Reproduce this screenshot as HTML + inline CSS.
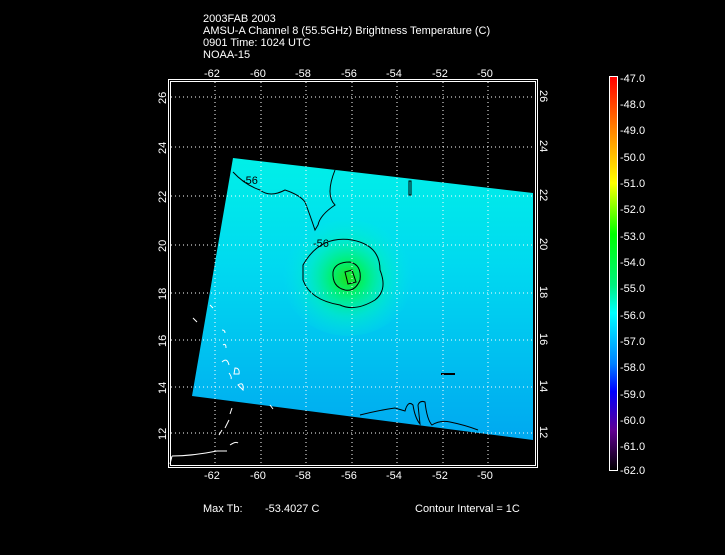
<!DOCTYPE html>
<html><head><style>
body{margin:0;background:#000;width:725px;height:550px;overflow:hidden;font-family:"Liberation Sans",sans-serif}
svg text{font-family:"Liberation Sans",sans-serif;fill:#fff;font-size:11px}
</style></head><body>
<svg width="725" height="550" xmlns="http://www.w3.org/2000/svg">
<defs>
<radialGradient id="g" cx="348" cy="278" r="65" gradientUnits="userSpaceOnUse">
<stop offset="0" stop-color="#20e020"/><stop offset="0.25" stop-color="#00f070"/><stop offset="0.6" stop-color="#00f0c0" stop-opacity="0.6"/><stop offset="1" stop-color="#00e8e8" stop-opacity="0"/>
</radialGradient>
<linearGradient id="b" x1="0" y1="158" x2="0" y2="440" gradientUnits="userSpaceOnUse">
<stop offset="0" stop-color="#00f0e8"/><stop offset="0.4" stop-color="#00d8f0"/><stop offset="1" stop-color="#00a8f0"/>
</linearGradient>
<linearGradient id="cb" x1="0" y1="77" x2="0" y2="470" gradientUnits="userSpaceOnUse">
<stop offset="0" stop-color="#ff0000"/><stop offset="0.13" stop-color="#ff8000"/><stop offset="0.27" stop-color="#ffff00"/><stop offset="0.4" stop-color="#00ff00"/><stop offset="0.53" stop-color="#00f080"/><stop offset="0.6" stop-color="#00ffff"/><stop offset="0.73" stop-color="#0080ff"/><stop offset="0.8" stop-color="#0000ff"/><stop offset="0.9" stop-color="#600090"/><stop offset="1" stop-color="#000000"/>
</linearGradient>
</defs>
<text x="203" y="22">2003FAB 2003</text>
<text x="203" y="34">AMSU-A Channel 8 (55.5GHz) Brightness Temperature (C)</text>
<text x="203" y="46">0901 Time: 1024 UTC</text>
<text x="203" y="58">NOAA-15</text>
<polygon points="233,158 533,193 533,440 192,396" fill="url(#b)"/>
<ellipse cx="348" cy="278" rx="65" ry="58" fill="url(#g)"/>
<g fill="none" stroke="#000" stroke-width="1">
<path d="M303,265 Q320,235 352,240 Q380,245 380,270 Q388,290 375,300 Q355,312 340,305 Q310,300 303,280 Z"/>
<path d="M333,272 Q335,262 350,262 Q362,265 360,280 Q355,292 345,290 Q332,287 333,272 Z"/>
<path d="M345,272 L352,270 L356,282 L348,284 Z"/>
<path d="M233,172 Q245,185 260,190 Q270,198 285,190 Q300,195 305,202 Q310,215 315,230 L318,225 Q320,215 335,205 Q325,195 335,170"/>
<path d="M409,181 L409,195 L411,195 L411,181 Z"/>
<path d="M360,415 Q380,410 395,408 L405,411 Q408,400 413,405 Q415,418 420,424 L418,405 Q420,400 425,402 Q427,420 432,425 Q440,420 450,422 Q465,425 478,430"/>
</g>
<line x1="441" y1="374" x2="455" y2="374" stroke="#000" stroke-width="2"/>
<g fill="none" stroke="#fff" stroke-width="1">
<path d="M193,318 l4,4 M210,305 l3,3 M222,330 q3,0 3,3 M223,345 q3,-2 3,3 M222,362 q5,-5 7,3 M229,373 q3,4 2,6 M235,368 q5,0 4,6 l-5,0 Z M238,385 q6,-4 5,5 Z M232,408 l-2,6 M229,420 l-4,8 M222,430 l-3,5 M230,445 q6,-4 8,-2 M172,456 q20,0 45,-5 l10,0 M172,456 l-2,8 M270,405 l3,4"/>
</g>
<g stroke="#fff" stroke-width="1" stroke-dasharray="1,3">
<line x1="215" y1="82" x2="215" y2="466"/><line x1="261" y1="82" x2="261" y2="466"/><line x1="306" y1="82" x2="306" y2="466"/><line x1="352" y1="82" x2="352" y2="466"/><line x1="397" y1="82" x2="397" y2="466"/><line x1="443" y1="82" x2="443" y2="466"/><line x1="488" y1="82" x2="488" y2="466"/>
<line x1="171" y1="97" x2="535" y2="97"/><line x1="171" y1="147" x2="535" y2="147"/><line x1="171" y1="196" x2="535" y2="196"/><line x1="171" y1="245" x2="535" y2="245"/><line x1="171" y1="293" x2="535" y2="293"/><line x1="171" y1="340" x2="535" y2="340"/><line x1="171" y1="387" x2="535" y2="387"/><line x1="171" y1="433" x2="535" y2="433"/>
</g>
<rect x="168.5" y="79.5" width="369" height="388" fill="none" stroke="#fff" stroke-width="1"/>
<rect x="170.5" y="81.5" width="365" height="384" fill="none" stroke="#fff" stroke-width="1"/>
<g font-size="11">
<text x="204" y="77">-62</text><text x="250" y="77">-60</text><text x="295" y="77">-58</text><text x="341" y="77">-56</text><text x="386" y="77">-54</text><text x="432" y="77">-52</text><text x="477" y="77">-50</text>
<text x="204" y="479">-62</text><text x="250" y="479">-60</text><text x="295" y="479">-58</text><text x="341" y="479">-56</text><text x="386" y="479">-54</text><text x="432" y="479">-52</text><text x="477" y="479">-50</text>
</g>
<g font-size="11">
<text transform="translate(166,104) rotate(-90)">26</text><text transform="translate(166,154) rotate(-90)">24</text><text transform="translate(166,203) rotate(-90)">22</text><text transform="translate(166,252) rotate(-90)">20</text><text transform="translate(166,300) rotate(-90)">18</text><text transform="translate(166,347) rotate(-90)">16</text><text transform="translate(166,394) rotate(-90)">14</text><text transform="translate(166,440) rotate(-90)">12</text>
<text transform="translate(540,90) rotate(90)">26</text><text transform="translate(540,140) rotate(90)">24</text><text transform="translate(540,189) rotate(90)">22</text><text transform="translate(540,238) rotate(90)">20</text><text transform="translate(540,286) rotate(90)">18</text><text transform="translate(540,333) rotate(90)">16</text><text transform="translate(540,380) rotate(90)">14</text><text transform="translate(540,426) rotate(90)">12</text>
</g>
<text x="242" y="184" font-size="9" style="fill:#000">-56</text>
<text x="313" y="247" font-size="10" style="fill:#000">-56</text>
<rect x="609.5" y="76.5" width="8" height="394" fill="url(#cb)" stroke="#fff"/>
<g font-size="11">
<text x="620" y="82">-47.0</text><text x="620" y="108">-48.0</text><text x="620" y="134">-49.0</text><text x="620" y="161">-50.0</text><text x="620" y="187">-51.0</text><text x="620" y="213">-52.0</text><text x="620" y="240">-53.0</text><text x="620" y="266">-54.0</text><text x="620" y="292">-55.0</text><text x="620" y="319">-56.0</text><text x="620" y="345">-57.0</text><text x="620" y="371">-58.0</text><text x="620" y="398">-59.0</text><text x="620" y="424">-60.0</text><text x="620" y="450">-61.0</text><text x="620" y="474">-62.0</text>
</g>
<text x="203" y="512">Max Tb:</text>
<text x="265" y="512">-53.4027   C</text>
<text x="415" y="512">Contour Interval = 1C</text>
</svg>
</body></html>
